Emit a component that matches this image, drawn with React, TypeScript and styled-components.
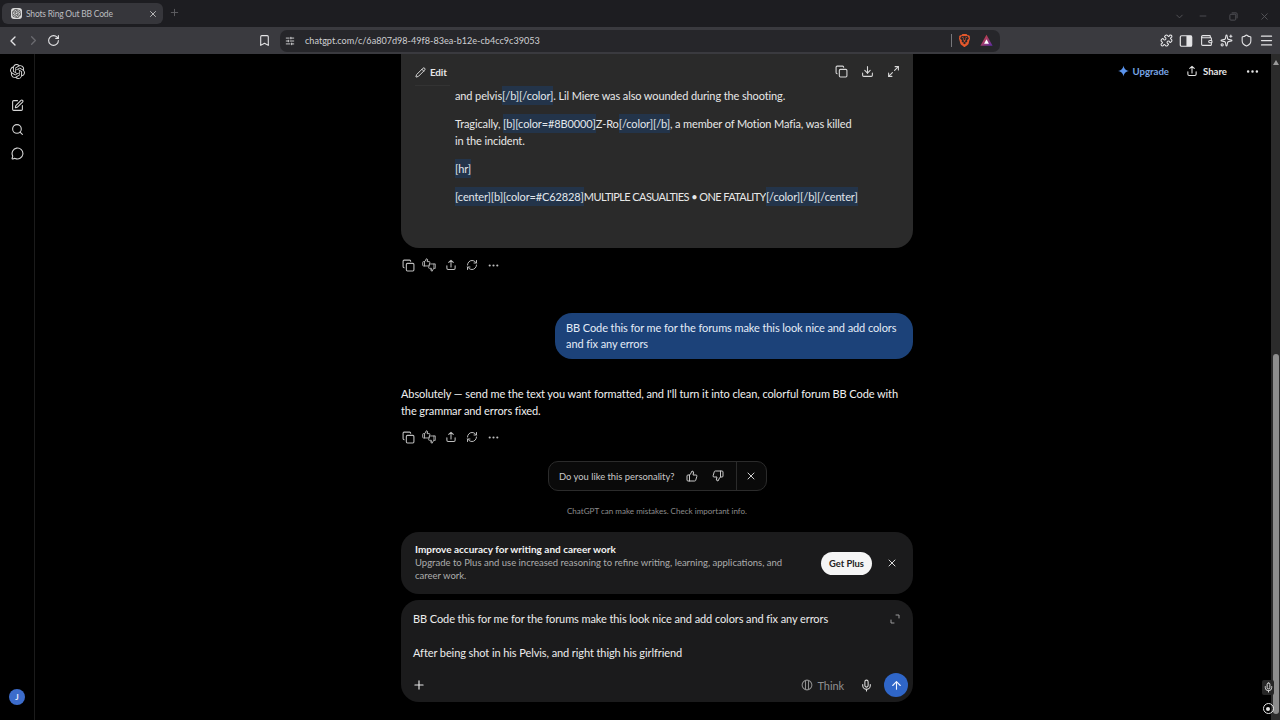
import React from "react";
import styled, { createGlobalStyle } from "styled-components";
import {
  ChevronLeft, ChevronRight, ChevronDown, RotateCw, Bookmark, SlidersHorizontal, Puzzle, Wallet, Shield, Menu, Minus, X, Plus,
  Copy, Download, Maximize2, Pencil, SquarePen, Search, MessageCircle, RefreshCw, MoreHorizontal, ThumbsUp, ThumbsDown,
  Mic, ArrowUp, Sparkles,
} from "lucide-react";
import { SiOpenai, SiBrave } from "react-icons/si";

const UI = `Lato, "Open Sans", "Liberation Sans", sans-serif`;

const Global = createGlobalStyle`
  html, body { margin: 0; padding: 0; background: #000; overflow: hidden; }
  * { box-sizing: border-box; }
  body { font-family: ${UI}; }
`;

const Page = styled.div`
  width: 1280px; height: 720px; display: flex; flex-direction: column; background: #000; color: #ececec; position: relative;
`;

/* browser chrome */
const TabStrip = styled.div`
  height: 27px; background: #1d1d21; display: flex; align-items: flex-start; padding: 3px 4px 0 2px; color: #8c8c90;
`;
const Tab = styled.div`
  width: 161px; height: 21px; background: #36363b; border-radius: 6px; display: flex; align-items: center; padding: 0 5px 0 9px; gap: 4px; color: #bcbcbe;
`;
const Favicon = styled.span`
  width: 11px; height: 11px; border-radius: 3px; background: #d8d8d8; color: #333; display: flex; align-items: center; justify-content: center; flex: none;
`;
const TabTitle = styled.span`
  flex: 1; font-size: 8.5px; letter-spacing: -0.2px; white-space: nowrap; color: #bdbdc0;
`;
const NewTab = styled.span`
  display: flex; margin: 4px 0 0 6px; color: #5f5f64;
`;
const WindowControls = styled.div`
  margin-left: auto; display: flex; align-items: center; height: 26px; color: #55555a;
`;
const WinBtn = styled.span<{ $w: number }>`
  width: ${(p) => p.$w}px; display: flex; justify-content: center;
`;
const Toolbar = styled.div`
  height: 27px; background: #3a3a3f; display: flex; align-items: center;
`;
const ToolLeft = styled.div`
  width: 280px; display: flex; align-items: center; padding: 0 8px 0 3px; color: #e4e4e6;
`;
const ToolBtn = styled.span<{ $dim?: boolean; $w?: number }>`
  width: ${(p) => p.$w ?? 20}px; display: flex; justify-content: center; align-items: center; color: ${(p) => (p.$dim ? "#6b6b70" : "#e4e4e6")};
`;
const Push = styled.span`
  margin-left: auto; display: flex;
`;
const UrlBar = styled.div`
  width: 720px; height: 22px; background: #26262a; border-radius: 7px; display: flex; align-items: center; padding: 0 4px 0 5px; color: #cfcfd2;
`;
const UrlText = styled.span`
  margin-left: 10px; padding-bottom: 1px; font-size: 9.1px; color: #cfcfd2; white-space: nowrap;
`;
const UrlDivider = styled.span`
  width: 1px; height: 13px; background: #77777b; margin-left: auto;
`;
const ToolRight = styled.div`
  flex: 1; display: flex; justify-content: flex-end; align-items: center; padding-right: 4px;
`;

/* page */
const Main = styled.div`
  flex: 1; min-height: 0; display: flex;
`;
const Rail = styled.nav`
  width: 35px; flex: none; border-right: 1px solid #1b1b1b; display: flex; flex-direction: column; align-items: center; padding-top: 9px; color: #d6d6d6;
`;
const RailIcon = styled.span<{ $top: number }>`
  height: 16px; display: flex; align-items: center; margin-top: ${(p) => p.$top}px;
`;
const Avatar = styled.span`
  margin-top: auto; margin-bottom: 15px; width: 16px; height: 16px; border-radius: 50%; background: #3c6ccb; color: #e8eefc; font-size: 8px; font-weight: 700; display: flex; align-items: center; justify-content: center;
`;
const Stage = styled.div`
  flex: 1; display: grid; grid-template-columns: 366px 512px 1fr;
`;
const Column = styled.main`
  grid-column: 2; display: flex; flex-direction: column; font-size: 11px; letter-spacing: -0.09px; line-height: 17px;
`;
const TopActions = styled.div`
  grid-column: 3; display: flex; justify-content: flex-end; align-items: center; height: 18px; margin-top: 8px; padding-right: 11px; font-size: 9.6px; font-weight: 700;
`;
const Upgrade = styled.span`
  display: flex; align-items: center; gap: 4px; color: #78a6e6;
`;
const ShareBtn = styled.span`
  display: flex; align-items: center; gap: 5px; color: #e6e6e6; margin-left: 17px;
`;
const DotsBtn = styled.span`
  display: flex; color: #e6e6e6; margin-left: 18px;
`;
const CodeCard = styled.section`
  background: #2a2a2a; border-radius: 0 0 18px 18px; padding-bottom: 43px;
`;
const CardHead = styled.div`
  height: 33px; display: flex; align-items: center; padding: 2px 13px 0 14px; color: #d8d8d8; font-size: 9.8px; font-weight: 700;
`;
const EditTag = styled.span`
  display: flex; align-items: center; gap: 4px; padding: 7px 3px 4px 0; border-bottom: 1px solid #333; color: #e6e6e6;
`;
const CardTools = styled.span`
  margin-left: auto; display: flex; gap: 13px;
`;
const CardBody = styled.div`
  padding-left: 54px;
`;
const Para = styled.p`
  margin: 0 0 11px; color: #e8e8e8; white-space: nowrap; letter-spacing: -0.12px;
  &:last-child { margin-bottom: 0; }
`;
const Tag = styled.span`
  background: #23344a; color: #e2e7ec; padding: 3px 0;
`;
const Caps = styled.span`
  letter-spacing: -0.6px;
`;
const Actions = styled.div<{ $top: number }>`
  height: 24px; margin-top: ${(p) => p.$top}px; display: flex; align-items: center; gap: 7.3px; color: #bdbdbd;
`;
const ActionIcon = styled.span`
  width: 14px; display: flex; justify-content: center;
`;
const UserBubble = styled.div`
  align-self: flex-end; margin-top: 36px; width: 358px; height: 46px; padding: 7px 11px; border-radius: 17px; background: #1c4279; color: #e4ecf7; line-height: 16px;
`;
const Reply = styled.p`
  margin: 26px 0 0; color: #f0f0f0; white-space: nowrap;
`;
const Feedback = styled.div`
  align-self: flex-start; margin: 12px 0 0 147px; width: 219px; height: 30px; border: 1px solid #2b2b2b; background: #0a0a0a; border-radius: 10px; display: flex; align-items: center; padding-left: 10px; font-size: 9.4px; letter-spacing: 0; color: #c8c8c8; white-space: nowrap;
`;
const FeedbackIcon = styled.span<{ $left: number }>`
  display: flex; margin-left: ${(p) => p.$left}px; color: #c8c8c8;
`;
const FeedbackClose = styled.span`
  margin-left: 12px; align-self: stretch; flex: 1; border-left: 1px solid #2b2b2b; display: flex; align-items: center; justify-content: center; color: #d0d0d0;
`;
const Disclaimer = styled.div`
  margin-top: 13px; height: 14px; line-height: 14px; text-align: center; font-size: 8.05px; letter-spacing: 0; color: #8c8c8c;
`;
const Banner = styled.aside`
  margin-top: 14px; height: 62px; border-radius: 18px; background: #1b1b1c; display: flex; align-items: center; padding: 0 15px 0 14px;
`;
const BannerText = styled.div`
  width: 372px; padding-bottom: 2px; font-size: 9.5px; letter-spacing: 0; line-height: 13px; color: #adadad;
`;
const BannerTitle = styled.div`
  color: #f2f2f2; font-size: 10px; font-weight: 700;
`;
const GetPlus = styled.span`
  margin-left: auto; width: 51px; height: 23px; border-radius: 12px; background: #f5f5f5; color: #222; font-size: 9.4px; letter-spacing: 0; font-weight: 700; display: flex; align-items: center; justify-content: center;
`;
const BannerClose = styled.span`
  margin-left: 14px; display: flex; color: #dcdcdc;
`;
const Composer = styled.div`
  margin-top: 6px; height: 102px; border-radius: 18px; background: #1b1b1c; padding: 10px 12px 5px 12px; display: flex; flex-direction: column;
`;
const Draft = styled.div`
  height: 51px; display: flex; color: #ededed; white-space: pre;
`;
const DraftLines = styled.div`
  flex: 1;
`;
const DraftExpand = styled.span`
  display: flex; align-items: center; height: 17px; color: #9a9a9a; margin-right: 1px;
`;
const ComposerBar = styled.div`
  margin-top: 12px; height: 24px; display: flex; align-items: center; color: #e6e6e6;
`;
const PlusBtn = styled.span`
  display: flex; margin-left: -1px;
`;
const ThinkBtn = styled.span`
  margin-left: auto; display: flex; align-items: center; gap: 5px; color: #8f8f8f; font-size: 11px;
`;
const MicBtn = styled.span`
  margin-left: 16px; display: flex; color: #dedede;
`;
const SendBtn = styled.span`
  margin: 0 -7px 0 11px; width: 24px; height: 24px; border-radius: 50%; background: #2f66c8; color: #f2f6ff; display: flex; align-items: center; justify-content: center;
`;
const Scrollbar = styled.div`
  width: 9px; flex: none; background: #2b2b2b; display: flex; flex-direction: column; align-items: center; position: relative;
`;
const ScrollUp = styled.span`
  margin-top: 6px; width: 0; height: 0; border-left: 3px solid transparent; border-right: 3px solid transparent; border-bottom: 5px solid #9a9a9a;
`;
const Thumb = styled.div`
  margin-top: 289px; margin-bottom: 6px; flex: 1; width: 6px; border-radius: 3px; background: #8d8d8d;
`;
const FloatingTools = styled.div`
  position: absolute; right: 6px; bottom: 6px; display: flex; flex-direction: column; align-items: center; gap: 8px; color: #e6e6e6;
`;
const FloatingMic = styled.span`
  display: flex; background: #262626; padding: 2px 0 2px 1px; border-radius: 2px;
`;
const TargetDot = styled.span`
  width: 11px; height: 11px; border: 1.5px solid #e6e6e6; border-radius: 50%; display: flex; align-items: center; justify-content: center;
  &::after { content: ""; width: 4px; height: 4px; border-radius: 50%; background: #e6e6e6; }
`;

const TinyThumbs = () => (
  <svg width="16" height="16" viewBox="0 0 24 24" fill="none" stroke="currentColor" strokeWidth="2.5" strokeLinecap="round" strokeLinejoin="round">
    <g transform="translate(0 0) scale(.62)">
      <path d="M7 10v12" />
      <path d="M15 5.88 14 10h5.83a2 2 0 0 1 1.92 2.56l-2.33 8A2 2 0 0 1 17.5 22H4a2 2 0 0 1-2-2v-8a2 2 0 0 1 2-2h2.76a2 2 0 0 0 1.79-1.11L12 2a3.13 3.13 0 0 1 3 3.88Z" />
    </g>
    <g transform="translate(10 9) scale(.62)">
      <path d="M17 14V2" />
      <path d="M9 18.12 10 14H4.17a2 2 0 0 1-1.92-2.56l2.33-8A2 2 0 0 1 6.5 2H20a2 2 0 0 1 2 2v8a2 2 0 0 1-2 2h-2.76a2 2 0 0 0-1.79 1.11L12 22a3.13 3.13 0 0 1-3-3.88Z" />
    </g>
  </svg>
);
const ShareIcon = ({ size = 13 }: { size?: number }) => (
  <svg width={size} height={size} viewBox="0 0 16 16" fill="none" stroke="currentColor" strokeWidth="1.4" strokeLinecap="round" strokeLinejoin="round">
    <path d="M8 10.5V2M5 4.6 8 1.8l3 2.8M2.5 9v3.4c0 1 .7 1.7 1.7 1.7h7.6c1 0 1.7-.7 1.7-1.7V9" />
  </svg>
);
const SidePanelIcon = () => (
  <svg width="14" height="14" viewBox="0 0 16 16" fill="none" stroke="currentColor" strokeWidth="1.4">
    <rect x="1.5" y="2" width="13" height="12" rx="1.5" />
    <rect x="8.5" y="2" width="6" height="12" fill="currentColor" stroke="none" />
  </svg>
);
const BraveTriangle = () => (
  <svg width="13" height="13" viewBox="0 0 16 16">
    <defs>
      <linearGradient id="rw" x1="0" y1="0" x2="1" y2="1">
        <stop offset="0" stopColor="#e0492f" />
        <stop offset="1" stopColor="#5a2aa8" />
      </linearGradient>
    </defs>
    <path d="M8 1 15.5 14.5H.5Z" fill="url(#rw)" />
    <path d="M8 6.5 11 12H5Z" fill="#fff" />
  </svg>
);
const ThinkIcon = () => (
  <svg width="12" height="12" viewBox="0 0 16 16" fill="none" stroke="currentColor" strokeWidth="1.4">
    <circle cx="8" cy="8" r="6.5" />
    <path d="M6 1.8v12.4M10 1.8v12.4" />
  </svg>
);
const BlueSpark = () => (
  <svg width="11" height="12" viewBox="0 0 12 12">
    <path d="M6 0c.5 3.4 2 5 6 6-4 1-5.500 2.600-6 6-.5-3.400-2-5-6-6 4-1 5.500-2.600 6-6Z" fill="#5a93ec" />
  </svg>
);
const CornerExpand = () => (
  <svg width="10" height="10" viewBox="0 0 10 10" fill="none" stroke="currentColor" strokeWidth="1" strokeLinecap="round">
    <path d="M6 1h3v3M1 6v3h3" />
  </svg>
);

export default function App() {
  return (
    <Page>
      <Global />
      <TabStrip>
        <Tab>
          <Favicon><SiOpenai size={9} /></Favicon>
          <TabTitle>Shots Ring Out BB Code</TabTitle>
          <X size={10} color="#d0d0d0" />
        </Tab>
        <NewTab><Plus size={11} /></NewTab>
        <WindowControls>
          <WinBtn $w={24}><ChevronDown size={11} /></WinBtn>
          <WinBtn $w={24}><Minus size={10} /></WinBtn>
          <WinBtn $w={37}>
            <svg width="9" height="9" viewBox="0 0 10 10" fill="none" stroke="currentColor"><rect x="1" y="2.500" width="6.500" height="6.500" rx="1" /><path d="M3 1h5c.6 0 1 .4 1 1v5" /></svg>
          </WinBtn>
          <WinBtn $w={24}><X size={11} /></WinBtn>
        </WindowControls>
      </TabStrip>
      <Toolbar>
        <ToolLeft>
          <ToolBtn><ChevronLeft size={16} /></ToolBtn>
          <ToolBtn $dim><ChevronRight size={15} /></ToolBtn>
          <ToolBtn><RotateCw size={13} /></ToolBtn>
          <Push><ToolBtn $w={16}><Bookmark size={13} /></ToolBtn></Push>
        </ToolLeft>
        <UrlBar>
          <ToolBtn $w={10}><SlidersHorizontal size={10} /></ToolBtn>
          <UrlText>chatgpt.com/c/6a807d98-49f8-83ea-b12e-cb4cc9c39053</UrlText>
          <UrlDivider />
          <ToolBtn $w={24}><SiBrave size={13} color="#e5582c" /></ToolBtn>
          <ToolBtn $w={20}><BraveTriangle /></ToolBtn>
        </UrlBar>
        <ToolRight>
          <ToolBtn><Puzzle size={13} /></ToolBtn>
          <ToolBtn><SidePanelIcon /></ToolBtn>
          <ToolBtn><Wallet size={13} /></ToolBtn>
          <ToolBtn><Sparkles size={13} /></ToolBtn>
          <ToolBtn><Shield size={13} /></ToolBtn>
          <ToolBtn><Menu size={15} /></ToolBtn>
        </ToolRight>
      </Toolbar>
      <Main>
        <Rail>
          <RailIcon $top={0}><SiOpenai size={15} /></RailIcon>
          <RailIcon $top={18}><SquarePen size={13} /></RailIcon>
          <RailIcon $top={8}><Search size={13} /></RailIcon>
          <RailIcon $top={8}><MessageCircle size={13} /></RailIcon>
          <Avatar>J</Avatar>
        </Rail>
        <Stage>
          <Column>
            <CodeCard>
              <CardHead>
                <EditTag><Pencil size={11} />Edit</EditTag>
                <CardTools>
                  <Copy size={13} />
                  <Download size={13} />
                  <Maximize2 size={13} />
                </CardTools>
              </CardHead>
              <CardBody>
                <Para>and pelvis<Tag>[/b][/color]</Tag>. Lil Miere was also wounded during the shooting.</Para>
                <Para>Tragically, <Tag>[b][color=#8B0000]</Tag>Z-Ro<Tag>[/color][/b]</Tag>, a member of Motion Mafia, was killed<br />in the incident.</Para>
                <Para><Tag>[hr]</Tag></Para>
                <Para><Tag>[center][b][color=#C62828]</Tag><Caps>MULTIPLE CASUALTIES • ONE FATALITY</Caps><Tag>[/color][/b][/center]</Tag></Para>
              </CardBody>
            </CodeCard>
            <Actions $top={5}>
              <ActionIcon><Copy size={13} /></ActionIcon>
              <ActionIcon><TinyThumbs /></ActionIcon>
              <ActionIcon><ShareIcon size={12} /></ActionIcon>
              <ActionIcon><RefreshCw size={12} /></ActionIcon>
              <ActionIcon><MoreHorizontal size={13} /></ActionIcon>
            </Actions>
            <UserBubble>BB Code this for me for the forums make this look nice and add colors and fix any errors</UserBubble>
            <Reply>Absolutely — send me the text you want formatted, and I'll turn it into clean, colorful forum BB Code with<br />the grammar and errors fixed.</Reply>
            <Actions $top={6}>
              <ActionIcon><Copy size={13} /></ActionIcon>
              <ActionIcon><TinyThumbs /></ActionIcon>
              <ActionIcon><ShareIcon size={12} /></ActionIcon>
              <ActionIcon><RefreshCw size={12} /></ActionIcon>
              <ActionIcon><MoreHorizontal size={13} /></ActionIcon>
            </Actions>
            <Feedback>
              Do you like this personality?
              <FeedbackIcon $left={11}><ThumbsUp size={12} /></FeedbackIcon>
              <FeedbackIcon $left={14}><ThumbsDown size={12} /></FeedbackIcon>
              <FeedbackClose><X size={12} /></FeedbackClose>
            </Feedback>
            <Disclaimer>ChatGPT can make mistakes. Check important info.</Disclaimer>
            <Banner>
              <BannerText>
                <BannerTitle>Improve accuracy for writing and career work</BannerTitle>
                Upgrade to Plus and use increased reasoning to refine writing, learning, applications, and career work.
              </BannerText>
              <GetPlus>Get Plus</GetPlus>
              <BannerClose><X size={12} /></BannerClose>
            </Banner>
            <Composer>
              <Draft>
                <DraftLines>{"BB Code this for me for the forums make this look nice and add colors and fix any errors\n\nAfter being shot in his Pelvis, and right thigh his girlfriend"}</DraftLines>
                <DraftExpand><CornerExpand /></DraftExpand>
              </Draft>
              <ComposerBar>
                <PlusBtn><Plus size={14} /></PlusBtn>
                <ThinkBtn><ThinkIcon />Think</ThinkBtn>
                <MicBtn><Mic size={13} /></MicBtn>
                <SendBtn><ArrowUp size={13} /></SendBtn>
              </ComposerBar>
            </Composer>
          </Column>
          <TopActions>
            <Upgrade><BlueSpark />Upgrade</Upgrade>
            <ShareBtn><ShareIcon size={12} />Share</ShareBtn>
            <DotsBtn><MoreHorizontal size={15} /></DotsBtn>
          </TopActions>
        </Stage>
        <Scrollbar>
          <ScrollUp />
          <Thumb />
          <FloatingTools>
            <FloatingMic><Mic size={11} /></FloatingMic>
            <TargetDot />
          </FloatingTools>
        </Scrollbar>
      </Main>
    </Page>
  );
}
